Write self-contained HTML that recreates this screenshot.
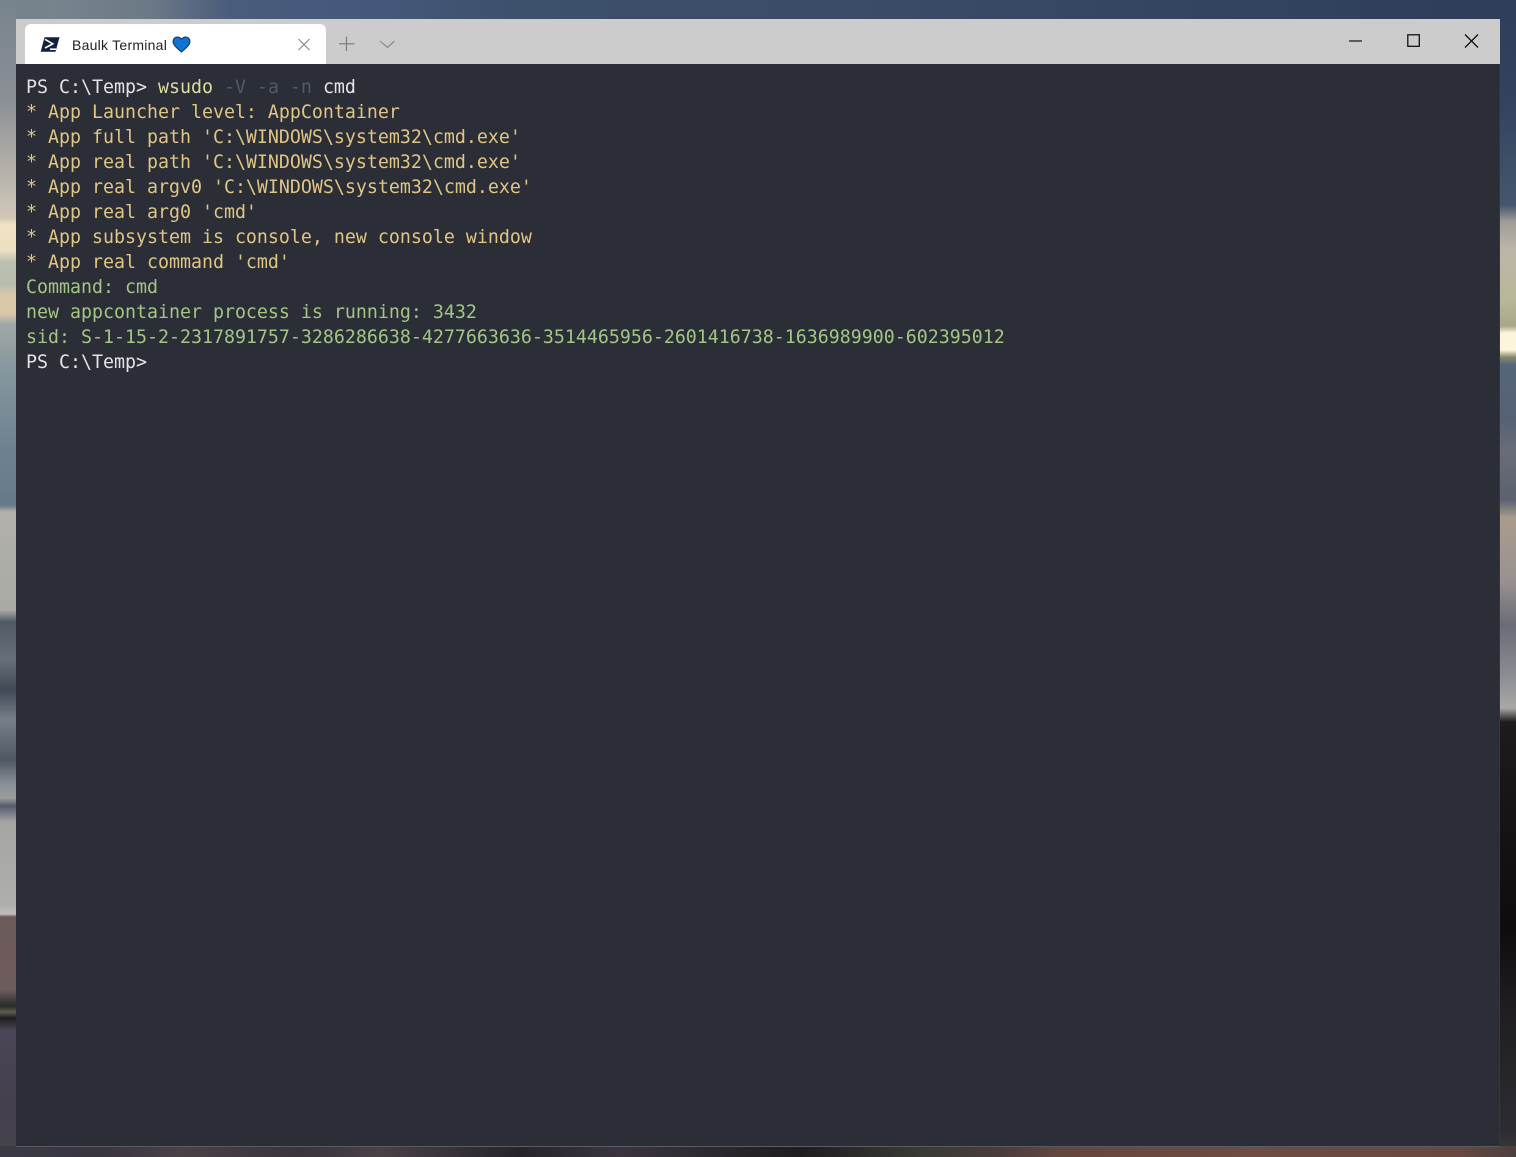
<!DOCTYPE html>
<html lang="en"><head><meta charset="utf-8"><title>Baulk Terminal</title>
<style>
html,body{margin:0;padding:0;width:1516px;height:1157px;overflow:hidden;background:#2c3a50}
.bg{position:absolute}
#top{left:0;top:0;width:1516px;height:20px;background:linear-gradient(90deg,#75828c 0,#77838d 55px,#6c7986 150px,#4a5c7c 230px,#44587a 380px,#3d506c 520px,#3a4b66 900px,#324360 1250px,#2e3d58 1516px)}
#left{left:0;top:0;width:16px;height:1157px;background:linear-gradient(180deg,#77838d 0,#8b9096 100px,#aeaca6 160px,#c9c1b6 205px,#d0c6b6 218px,#efe3c2 224px,#ece0c2 250px,#bcc0b0 262px,#b8bcae 285px,#dbc9a8 296px,#d8c8aa 314px,#a0a8a6 324px,#86979e 370px,#6d8290 450px,#66798a 505px,#b2b1ab 512px,#a9a9a5 610px,#4f5a66 622px,#66707a 660px,#3f4a56 690px,#75808a 720px,#4d5862 760px,#8b9198 785px,#9a9c9e 798px,#575b6e 806px,#a5a5a4 822px,#aeaeaa 905px,#c0bcc0 914px,#6a5a58 917px,#6e5c5c 990px,#2a2a2a 1006px,#5e5c50 1012px,#1f1d20 1018px,#4a4656 1030px,#44404e 1100px,#46424c 1157px)}
#right{left:1500px;top:0;width:16px;height:1157px;background:linear-gradient(180deg,#2e3d58 0,#33435e 100px,#45566e 205px,#a09e98 222px,#bdb5a8 250px,#b8b898 300px,#a8a888 326px,#fbf5dc 333px,#fbf5dc 350px,#8a8870 357px,#55657a 365px,#566274 420px,#6a6c78 450px,#5c6270 500px,#a89c8c 518px,#9a9290 580px,#6a6c76 625px,#8e9096 680px,#aaa9a6 708px,#1f1b1d 722px,#191517 800px,#0f0c0e 930px,#1f1d20 1004px,#2c2c32 1130px,#3a3a3e 1157px)}
#bot{left:0;top:1146px;width:1516px;height:11px;background:linear-gradient(90deg,#3b3a44 0,#3a3540 100px,#4a4048 180px,#3a343c 300px,#4a4048 380px,#26242a 520px,#3b3440 620px,#1f1d1f 800px,#3a3a34 920px,#4a3c3c 1000px,#64463e 1060px,#704c42 1250px,#684840 1460px,#4a4040 1516px)}
#win{left:16px;top:19px;width:1484px;height:1127px;background:#2b2e36}
#line{left:16px;top:1146px;width:1484px;height:1px;background:#5a5c64}
#edge{left:1499px;top:64px;width:1px;height:1082px;background:#33363e}
#bar{left:16px;top:19px;width:1484px;height:45px;background:#cccccc}
#tab{left:25px;top:24px;width:301px;height:40px;background:#fff;border-radius:6px 6px 0 0}
#label{left:72px;top:36px;font:14px/18px "Liberation Sans",sans-serif;color:#222;letter-spacing:.25px;white-space:nowrap}
#term{left:26px;top:75px;margin:0;font-family:"DejaVu Sans Mono","Liberation Mono",monospace;font-size:18.28px;line-height:25px;color:#dcdfe4;white-space:pre;filter:blur(.25px)}
.y{color:#e0c684}.w{color:#dcdca0}.m{color:#525a66}.g{color:#a3c585}.c{color:#e2e4e8}
svg{position:absolute;left:0;top:0}
</style></head>
<body>
<div class="bg" id="top"></div>
<div class="bg" id="left"></div>
<div class="bg" id="right"></div>
<div class="bg" id="bot"></div>
<div class="bg" id="win"></div>
<div class="bg" id="line"></div>
<div class="bg" id="edge"></div>
<div class="bg" id="bar"></div>
<div class="bg" id="tab"></div>
<div class="bg" id="label">Baulk Terminal</div>
<svg width="1516" height="70" viewBox="0 0 1516 70" fill="none">
  <path d="M44.500 37.300H59.500L55.500 51.700H40.700Z" fill="#12203f"/>
  <path d="M45 39.300L52.800 43.800L45 48" stroke="#fff" stroke-width="1.600"/>
  <path d="M50 49.200H56" stroke="#fff" stroke-width="1.600"/>
  <path d="M181.500 52C176 47.500 173 44.500 173 41.500C173 38.800 175 37 177.300 37C179 37 180.500 37.800 181.500 39.300C182.500 37.800 184 37 185.700 37C188 37 190 38.800 190 41.500C190 44.500 187 47.500 181.500 52Z" fill="#0f74d1" stroke="#12315a" stroke-width="1"/>
  <path d="M298.500 39L309.500 50M309.500 39L298.500 50" stroke="#8a8a8a" stroke-width="1.200"/>
  <path d="M346.500 36.500V51M339 43.800H354.500" stroke="#7a7a7a" stroke-width="1.200"/>
  <path d="M380 41L387.500 47.500L394.500 41" stroke="#8a8a8a" stroke-width="1.200"/>
  <path d="M1349 41H1362" stroke="#111" stroke-width="1.200"/>
  <rect x="1407.800" y="34.800" width="11.500" height="11.500" stroke="#111" stroke-width="1.300"/>
  <path d="M1465 34.500L1478 47.500M1478 34.500L1465 47.500" stroke="#111" stroke-width="1.300"/>
</svg>
<pre class="bg" id="term"><span class="c">PS C:\Temp&gt; </span><span class="w">wsudo</span> <span class="m">-V -a -n</span> <span class="c">cmd</span>
<span class="y">* App Launcher level: AppContainer
* App full path 'C:\WINDOWS\system32\cmd.exe'
* App real path 'C:\WINDOWS\system32\cmd.exe'
* App real argv0 'C:\WINDOWS\system32\cmd.exe'
* App real arg0 'cmd'
* App subsystem is console, new console window
* App real command 'cmd'</span>
<span class="g">Command: cmd
new appcontainer process is running: 3432
sid: S-1-15-2-2317891757-3286286638-4277663636-3514465956-2601416738-1636989900-602395012</span>
<span class="c">PS C:\Temp&gt;</span></pre>
</body></html>
